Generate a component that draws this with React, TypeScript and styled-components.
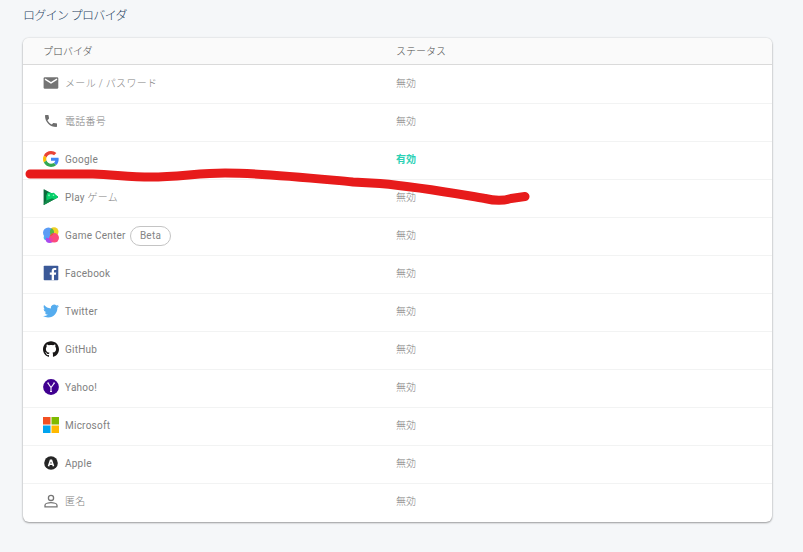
import React from 'react';
import styled, { createGlobalStyle } from 'styled-components';

const GlobalStyle = createGlobalStyle`
  * { box-sizing: border-box; }
  body {
    margin: 0;
    background: #f5f7f9;
    font-family: Roboto, "Noto Sans CJK JP", sans-serif;
  }
`;

const Page = styled.main`
  position: relative;
  width: 803px;
  height: 552px;
  padding: 6px 31px 0 23px;
  overflow: hidden;
`;

const Title = styled.h1`
  margin: 0 0 12px;
  height: 20px;
  line-height: 20px;
  font-size: 12px;
  font-weight: 300;
  letter-spacing: -0.65px;
  color: #1f3f60;
`;

const Card = styled.section`
  border-radius: 6px;
  background: #fff;
  overflow: hidden;
  box-shadow: 0 1px 2px rgba(0, 0, 0, 0.34), 0 0 2px rgba(0, 0, 0, 0.16);
`;

const HeaderRow = styled.div`
  display: grid;
  grid-template-columns: 353px 1fr;
  align-items: center;
  height: 27px;
  padding: 0 20px 2px;
  border-bottom: 1px solid #dadada;
  background: #fafafa;
  font-size: 10px;
  font-weight: 300;
  color: #4c4c4c;
`;

const Row = styled.div`
  display: grid;
  grid-template-columns: 353px 1fr;
  align-items: center;
  height: 38px;
  padding: 0 20px 2px;
  border-bottom: 1px solid #f2f3f3;
  font-size: 10px;

  &:nth-child(2) { height: 39px; padding-bottom: 1px; }
  &:last-child { border-bottom-color: transparent; }
`;

const Provider = styled.div`
  display: flex;
  align-items: center;
`;

const IconBox = styled.span`
  display: flex;
  width: 16px;
  height: 16px;
  margin: 0 6px 2px 0;

  svg { display: block; width: 16px; height: 16px; }
`;

const Name = styled.span<{ $spacing: number }>`
  line-height: 16px;
  font-weight: 400;
  letter-spacing: ${(p) => p.$spacing}px;
  color: #808080;
  white-space: pre;

  &:lang(ja) { font-weight: 300; }
`;

const Light = styled.span`
  font-weight: 300;
`;

const Badge = styled.span`
  display: inline-flex;
  align-items: center;
  justify-content: center;
  width: 41px;
  height: 20px;
  margin-left: auto;
  border: 1px solid #c4c4c4;
  border-radius: 10px;
  letter-spacing: 0.25px;
  color: #858585;
`;

const BadgedName = styled.span`
  display: flex;
  align-items: center;
  width: 106px;
`;

const Status = styled.span<{ $enabled: boolean }>`
  line-height: 16px;
  font-weight: ${(p) => (p.$enabled ? 700 : 300)};
  color: ${(p) => (p.$enabled ? '#2bd1b5' : '#7c7c7c')};
`;

const Stroke = styled.svg`
  position: absolute;
  left: 0;
  top: 0;
  pointer-events: none;
`;

const Mail = () => (
  <svg viewBox="0 0 16 16">
    <rect x="0.6" y="2.2" width="14.7" height="11.5" rx="1.3" fill="#747474" />
    <path d="M2 4.200l6 3.700L14 4.200" fill="none" stroke="#fff" strokeWidth="1.400" />
  </svg>
);

const Phone = () => (
  <svg viewBox="0 0 24 24">
    <path fill="#6e6e6e" d="M6.620 10.790c1.440 2.830 3.760 5.140 6.590 6.590l2.200-2.200c.27-.27.67-.36 1.020-.24 1.120.37 2.330.57 3.570.57.55 0 1 .45 1 1V20c0 .55-.45 1-1 1-9.390 0-17-7.610-17-17 0-.55.45-1 1-1h3.500c.55 0 1 .45 1 1 0 1.250.2 2.450.57 3.570.11.35.03.74-.25 1.020l-2.200 2.200z" />
  </svg>
);

const Google = () => (
  <svg viewBox="0 0 48 48">
    <path fill="#ea4335" d="M24 9.5c3.54 0 6.71 1.22 9.21 3.6l6.85-6.85C35.9 2.38 30.47 0 24 0 14.62 0 6.51 5.38 2.56 13.22l7.98 6.19C12.43 13.72 17.74 9.5 24 9.5z" />
    <path fill="#4285f4" d="M46.98 24.55c0-1.57-.15-3.09-.38-4.55H24v9.02h12.94c-.58 2.96-2.26 5.48-4.78 7.18l7.73 6c4.51-4.18 7.09-10.36 7.09-17.65z" />
    <path fill="#fbbc05" d="M10.53 28.59c-.48-1.45-.76-2.99-.76-4.59s.27-3.14.76-4.59l-7.98-6.19C.92 16.46 0 20.12 0 24c0 3.88.92 7.54 2.56 10.78l7.97-6.19z" />
    <path fill="#34a853" d="M24 48c6.48 0 11.93-2.13 15.89-5.81l-7.73-6c-2.15 1.45-4.92 2.3-8.16 2.3-6.26 0-11.57-4.22-13.47-9.91l-7.98 6.19C6.51 42.62 14.62 48 24 48z" />
  </svg>
);

const PlayGames = () => (
  <svg viewBox="0 0 16 16">
    <path fill="#0b6b3c" d="M1 .3Q.6 0 .6.8v14.6q0 .7.7.3L14.8 8.6q.7-.5 0-1z" />
    <path fill="#128a4a" d="M.6 15.2L3.4 10.500l8.400-.5-10.500 5.700q-.7.4-.7-.5z" />
    <path fill="#06d06a" d="M4.2 4Q6 2.700 8.500 4.200 11 2.900 12 5l2.800 2.600q.7.5 0 1L12 10.200 9 9.600l-5.600 1.700Q2.600 7 4.200 4z" />
    <path d="M5 6.300h2M6 5.300v2" stroke="#8ff7bd" strokeWidth=".8" />
    <circle cx="10.500" cy="6.200" r=".8" fill="#8ff7bd" />
  </svg>
);

const GameCenter = () => (
  <svg viewBox="0 0 16 16">
    <circle cx="11" cy="4.800" r="4.500" fill="#f0d024" />
    <circle cx="3.500" cy="10.500" r="2.800" fill="#41b8ec" />
    <circle cx="6.600" cy="12" r="4" fill="#a84bee" />
    <circle cx="5.400" cy="5.800" r="5.400" fill="#5a9cf5" />
    <path d="M8.900 1.300a5.400 5.400 0 0 1 .8 8A4.500 4.500 0 0 1 8.900 1.300z" fill="#53b848" />
    <circle cx="11.200" cy="10.800" r="4.800" fill="#fb4b7b" />
    <path d="M6.600 9.500a4.800 4.800 0 0 1 3.600-3.400q.8 2.400-3.600 3.400z" fill="#d95f35" />
    <path d="M6.500 10a4.800 4.800 0 0 0 2.800 5.200Q11.500 11.500 6.500 10z" fill="#ed3fa5" />
  </svg>
);

const Facebook = () => (
  <svg viewBox="0 0 16 16">
    <rect x=".7" y=".7" width="14.600" height="14.600" rx=".8" fill="#3b5998" />
    <path fill="#fff" d="M8.700 15.300V9.700H6.800V7.500h1.900V5.900c0-1.900 1.150-2.900 2.850-2.900.8 0 1.500.06 1.700.09v2h-1.160c-.92 0-1.100.44-1.100 1.080V7.500h2.200l-.29 2.200H11v5.600z" />
  </svg>
);

const Twitter = () => (
  <svg viewBox="0 0 24 24">
    <path fill="#55acee" d="M23.953 4.570a10 10 0 0 1-2.825.775 4.958 4.958 0 0 0 2.163-2.723 10 10 0 0 1-3.127 1.184 4.920 4.920 0 0 0-8.384 4.482C7.690 8.095 4.067 6.130 1.640 3.162a4.822 4.822 0 0 0-.666 2.475c0 1.710.87 3.213 2.188 4.096a4.904 4.904 0 0 1-2.228-.616v.06a4.923 4.923 0 0 0 3.946 4.827 4.996 4.996 0 0 1-2.212.085 4.936 4.936 0 0 0 4.604 3.417 9.867 9.867 0 0 1-6.102 2.105c-.39 0-.779-.023-1.170-.067a13.995 13.995 0 0 0 7.557 2.209c9.053 0 13.998-7.496 13.998-13.985 0-.21 0-.42-.015-.63A9.935 9.935 0 0 0 24 4.590z" />
  </svg>
);

const GitHub = () => (
  <svg viewBox="0 0 24 24">
    <path fill="#191717" d="M12 .297c-6.630 0-12 5.373-12 12 0 5.303 3.438 9.800 8.205 11.385.6.113.82-.258.82-.577 0-.285-.01-1.040-.015-2.040-3.338.724-4.042-1.610-4.042-1.610C4.422 18.070 3.633 17.700 3.633 17.700c-1.087-.744.084-.729.084-.729 1.205.084 1.838 1.236 1.838 1.236 1.070 1.835 2.809 1.305 3.495.998.108-.776.417-1.305.76-1.605-2.665-.3-5.466-1.332-5.466-5.930 0-1.310.465-2.380 1.235-3.220-.135-.303-.54-1.523.105-3.176 0 0 1.005-.322 3.300 1.230.96-.267 1.980-.399 3-.405 1.020.006 2.040.138 3 .405 2.280-1.552 3.285-1.230 3.285-1.230.645 1.653.24 2.873.12 3.176.765.84 1.230 1.910 1.230 3.220 0 4.610-2.805 5.625-5.475 5.920.42.36.81 1.096.81 2.220 0 1.606-.015 2.896-.015 3.286 0 .315.21.69.825.57C20.565 22.092 24 17.592 24 12.297c0-6.627-5.373-12-12-12" />
  </svg>
);

const Yahoo = () => (
  <svg viewBox="0 0 16 16">
    <circle cx="8" cy="8" r="7.900" fill="#400090" />
    <path d="M5 4.200l3 4.300 3.300-4.300M8 8.400v4.200M4.300 4.100h1.600M10.300 4.100h1.600M7 12.500h2" fill="none" stroke="#f3edfa" strokeWidth="1.150" />
  </svg>
);

const Microsoft = () => (
  <svg viewBox="0 0 16 16">
    <path fill="#f25022" d="M0 0h7.500v7.500H0z" />
    <path fill="#7fba00" d="M8.500 0H16v7.500H8.500z" />
    <path fill="#00a4ef" d="M0 8.500h7.500V16H0z" />
    <path fill="#ffb900" d="M8.500 8.500H16V16H8.500z" />
  </svg>
);

const Apple = () => (
  <svg viewBox="0 0 16 16">
    <circle cx="8" cy="8" r="6.800" fill="#252525" />
    <path d="M5.500 11.300L7.500 5.200h1l2 6.100M6.300 9.300h3.400" fill="none" stroke="#fff" strokeWidth="1.600" />
  </svg>
);

const Anonymous = () => (
  <svg viewBox="0 0 16 16">
    <circle cx="8" cy="4.900" r="2.600" fill="none" stroke="#757575" strokeWidth="1.300" />
    <path d="M2 13.900v-1.600C2 10.500 5.800 9.700 8 9.700s6 .8 6 2.600v1.600z" fill="none" stroke="#757575" strokeWidth="1.300" />
  </svg>
);

interface ProviderInfo {
  name: string;
  suffix?: string;
  icon: () => React.ReactElement;
  lang?: string;
  spacing?: number;
  enabled?: boolean;
  beta?: boolean;
}

const providers: ProviderInfo[] = [
  { name: 'メール / パスワード', icon: Mail, lang: 'ja', spacing: 0.32 },
  { name: '電話番号', icon: Phone, lang: 'ja', spacing: 0.25 },
  { name: 'Google', icon: Google, enabled: true },
  { name: 'Play ', suffix: 'ゲーム', icon: PlayGames },
  { name: 'Game Center', icon: GameCenter, beta: true },
  { name: 'Facebook', icon: Facebook },
  { name: 'Twitter', icon: Twitter },
  { name: 'GitHub', icon: GitHub },
  { name: 'Yahoo!', icon: Yahoo },
  { name: 'Microsoft', icon: Microsoft },
  { name: 'Apple', icon: Apple },
  { name: '匿名', icon: Anonymous, lang: 'ja', spacing: 0.3 },
];

export default function App() {
  return (
    <>
      <GlobalStyle />
      <Page>
        <Title>ログイン プロバイダ</Title>
        <Card>
          <HeaderRow>
            <span>プロバイダ</span>
            <span>ステータス</span>
          </HeaderRow>
          {providers.map(({ name, suffix, icon: Icon, lang, spacing = 0.24, enabled = false, beta }) => {
            const label = (
              <Name lang={lang} $spacing={spacing}>
                {name}
                {suffix && <Light>{suffix}</Light>}
              </Name>
            );
            return (
              <Row key={name}>
                <Provider>
                  <IconBox><Icon /></IconBox>
                  {beta ? <BadgedName>{label}<Badge>Beta</Badge></BadgedName> : label}
                </Provider>
                <Status $enabled={enabled}>{enabled ? '有効' : '無効'}</Status>
              </Row>
            );
          })}
        </Card>
        <Stroke width="803" height="552" viewBox="0 0 803 552">
          <path
            d="M30 174H93C116 175 131 177 151 177C177 177 200 173 225 173C265 173 310 178 353 182L380 183.500C420 187 452 193 485 198.500Q500 202 511 198.500L525 196.500"
            fill="none"
            stroke="#e71b1b"
            strokeWidth="9"
            strokeLinecap="round"
            strokeLinejoin="round"
          />
        </Stroke>
      </Page>
    </>
  );
}
